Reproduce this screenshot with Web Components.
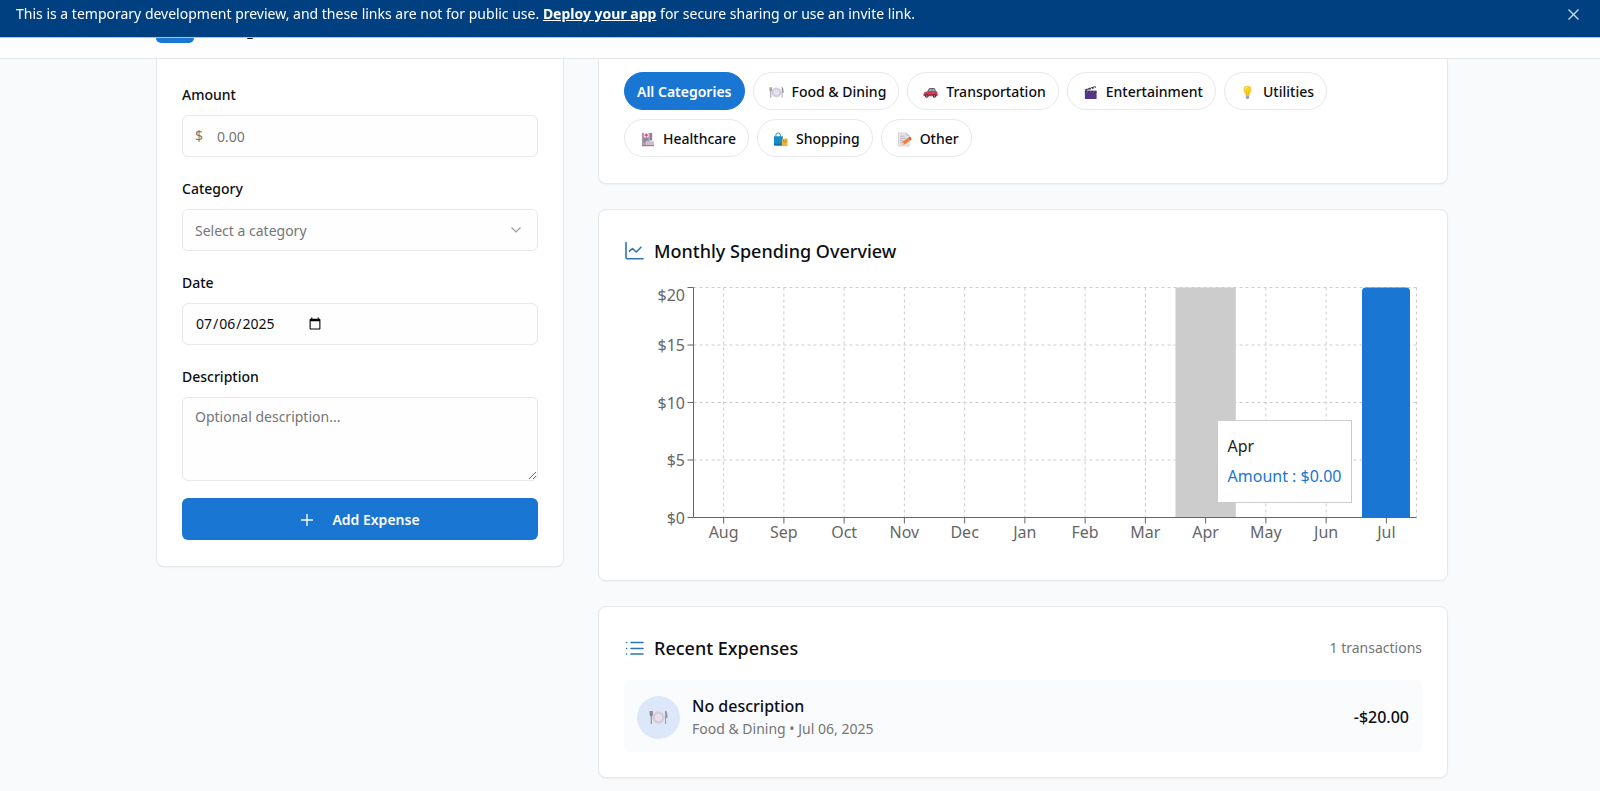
<!DOCTYPE html>
<html lang="en">
<head>
<meta charset="utf-8">
<meta name="viewport" content="width=device-width, initial-scale=1">
<title>Expenses</title>
<style>
  :root {
    --blue: #1976d2;
    --line: #e6e8eb;
    --ink: #0c0e12;
    --muted: #757575;
  }
  body {
    margin: 0;
    background: #f9fafc;
    color: var(--ink);
    font: 14px/20px "Noto Sans", "Open Sans", sans-serif;
  }
  main {
    box-sizing: border-box;
    max-width: 1296px;
    margin: 0 auto;
    padding: 0 0 12px 4px;
    display: grid;
    grid-template-columns: minmax(0, 1fr) minmax(0, 1fr) minmax(0, 1fr);
    column-gap: 34px;
    align-items: start;
  }
  .wide {
    grid-column: span 2;
    display: grid;
    gap: 25px;
  }
  @media (max-width: 900px) {
    main { grid-template-columns: minmax(0, 1fr); }
    .wide { grid-column: auto; }
  }
</style>
</head>
<body>
<preview-banner></preview-banner>
<app-header></app-header>
<main>
  <ui-card flush><expense-form></expense-form></ui-card>
  <div class="wide">
    <ui-card flush tight>
      <pill-row>
        <category-pill active>All Categories</category-pill>
        <category-pill icon="food">Food &amp; Dining</category-pill>
        <category-pill icon="car">Transportation</category-pill>
        <category-pill icon="film">Entertainment</category-pill>
        <category-pill icon="bulb">Utilities</category-pill>
        <category-pill icon="hospital">Healthcare</category-pill>
        <category-pill icon="bags">Shopping</category-pill>
        <category-pill icon="memo">Other</category-pill>
      </pill-row>
    </ui-card>
    <ui-card>
      <section-title icon="chart">Monthly Spending Overview</section-title>
      <spending-chart></spending-chart>
    </ui-card>
    <ui-card>
      <section-title icon="list">Recent Expenses<span slot="aside">1 transactions</span></section-title>
      <expense-row icon="food">
        No description
        <span slot="meta">Food &amp; Dining • Jul 06, 2025</span>
        <span slot="amount">-$20.00</span>
      </expense-row>
    </ui-card>
  </div>
</main>

<script>
const ICONS = {
  food: `<svg viewBox="0 0 16 16" aria-hidden="true"><circle cx="8" cy="8" r="5.3" fill="#d9d0de"/><circle cx="8" cy="8" r="3.7" fill="#e9dfec" stroke="#c5bccb" stroke-width=".6"/><path d="M1 2.500v3.200q0 1 .9 1.200V13.500M2.800 2.500v3.200q0 1-.9 1.200M1.900 2.500v4" fill="none" stroke="#8d8791" stroke-width=".9"/><path d="M14 13.500V2.500q1.200 1.200 1.200 5.500H14" fill="#a19aa6" stroke="#8d8791" stroke-width=".7"/></svg>`,
  car: `<svg viewBox="0 0 16 16" aria-hidden="true"><path d="M4.500 7l1.800-3.200q.3-.5.9-.5h4.600q.6 0 .9.500L14 7z" fill="#57626f"/><path d="M6 6.800L7.300 4.300h1.900v2.500zM10 4.300h1.700L13 6.800h-3z" fill="#9fb6cc"/><path d="M.6 9.500q0-2 2.200-2.400L6 6.500h7.500q1.900.2 2 1.800V11q0 .9-1 .9H1.500q-.9 0-.9-.9z" fill="#d53a50"/><path d="M.6 10.500h15" stroke="#8f2a42" stroke-width=".8"/><circle cx="4" cy="11.700" r="1.900" fill="#3b2d3d"/><circle cx="12.200" cy="11.700" r="1.900" fill="#3b2d3d"/><circle cx="4" cy="11.700" r=".8" fill="#b5aab8"/><circle cx="12.200" cy="11.700" r=".8" fill="#b5aab8"/></svg>`,
  film: `<svg viewBox="0 0 16 16" aria-hidden="true"><rect x="2" y="7" width="12.500" height="8" rx="1" fill="#553588"/><path d="M2 4.500L13.200 1l.6 1.900L2.600 6.300z" fill="#4a4453"/><path d="M4.500 3.800l1.500 1.400M8 2.700l1.500 1.400M11.300 1.700l1.400 1.300" stroke="#e9e6ee" stroke-width="1"/><rect x="2" y="6" width="12.500" height="2.200" fill="#3f2a66"/><path d="M4 8.200l1.500-2.200M7.500 8.200L9 6M11 8.200L12.500 6" stroke="#c9bfe0" stroke-width=".5"/></svg>`,
  bulb: `<svg viewBox="0 0 16 16" aria-hidden="true"><path d="M8 .800a4.300 4.300 0 0 1 4.300 4.300c0 2.600-2 3.300-2.300 6.200H6C5.700 8.400 3.700 7.700 3.700 5.100A4.300 4.300 0 0 1 8 .800z" fill="#f6cf2b"/><path d="M6 4.500q0-1.800 1.700-2.300" fill="none" stroke="#fff3a6" stroke-width="1"/><path d="M7 6.500v4.500M9 6.500v4.500" stroke="#e5a72b" stroke-width=".6"/><path d="M6.200 11.300h3.600v2.400q-.4 1.500-1.800 1.500t-1.800-1.500z" fill="#a79fae"/></svg>`,
  hospital: `<svg viewBox="0 0 16 16" aria-hidden="true"><path d="M2 1h8.500v14H2z" fill="#a79aae"/><path d="M10.500 1H13v8h-2.500z" fill="#8b8094"/><rect x="4.200" y="1" width="5" height="4.600" fill="#f6e9ef"/><path d="M6.700 1.500v3.600M4.900 3.300h3.600" stroke="#e0405c" stroke-width="1.300"/><path d="M3.500 7.500h5M3.500 9.500h3" stroke="#7a6d86" stroke-width="1"/><rect x="6" y="9.800" width="9" height="4" rx=".6" fill="#cdbfd0"/><path d="M2 14.500h13" stroke="#c65f86" stroke-width="1.200"/></svg>`,
  bags: `<svg viewBox="0 0 16 16" aria-hidden="true"><path d="M3 5V3.500Q3 1 5.500 1T8 3.500V5" fill="none" stroke="#2a86b4" stroke-width="1"/><path d="M1 4.500h9.500v10H1.800q-.8 0-.8-.8z" fill="#168dc4"/><path d="M1 12.500h9.500v2H1.800q-.8 0-.8-.8z" fill="#0f6fa6"/><path d="M9.500 7h6v8h-6z" fill="#e9b53c"/><path d="M11 8.500q0 2 1.500 2t1.500-2" fill="none" stroke="#a8741f" stroke-width=".8"/></svg>`,
  memo: `<svg viewBox="0 0 16 16" aria-hidden="true"><path d="M1.500 1h8.500l3 3v11H1.500z" fill="#e6e2ea" stroke="#c4bdca" stroke-width=".6"/><path d="M10 1v3h3" fill="#c4bdca"/><path d="M3.300 4.500h5M3.300 6.800h6.500M3.300 9h3.500M3.300 11.300h2" stroke="#a8a1b0" stroke-width=".7"/><path d="M5 13.500l1-3.300 6.500-4.400 2 2.900-6.500 4.500z" fill="#f0803c"/><path d="M12.300 5.900l1-.7q.6-.3 1 .2l1 1.500q.3.600-.2 1l-.9.600z" fill="#d0435a"/><path d="M5 13.500l1-3.300 2 3z" fill="#f4cda0"/></svg>`,
  chart: `<svg viewBox="0 0 20 20" aria-hidden="true" fill="none" stroke="#2b76b9" stroke-width="1.600" stroke-linecap="round" stroke-linejoin="round"><path d="M2 1.500v15q0 1.200 1.200 1.200H19"/><path d="M5.500 10.200l3-2.700 3.700 3.500 4.800-4.800"/></svg>`,
  list: `<svg viewBox="0 0 20 20" aria-hidden="true" fill="none" stroke="#2b76b9" stroke-width="1.600" stroke-linecap="round"><path d="M7 4.500H19M7 10.500H19M7 16H19"/><path d="M2.500 4.500h.1M2.500 10.500h.1M2.500 16h.1"/></svg>`,
};

const define = (name, render) => customElements.define(name, class extends HTMLElement {
  constructor() {
    super();
    this.attachShadow({ mode: 'open' });
  }
  connectedCallback() {
    this.shadowRoot.innerHTML = render(this);
  }
});

define('preview-banner', () => `
  <style>
    :host { position: fixed; inset: 0 0 auto 0; z-index: 2; display: flex; justify-content: space-between;
      box-sizing: border-box; min-height: 37px; padding: 0 20px 0 16px; background: #004080; color: #fff; line-height: 27px;
      box-shadow: 0 1px 0 #a9c4e4, 0 2px 6px #0000001f; }
    p { margin: 0; }
    a { color: inherit; font-weight: 700; text-decoration: underline; }
    button { display: flex; align-items: center; height: 28px; padding: 0; border: 0; background: none; color: #fff; cursor: pointer; }
    svg { width: 13px; height: 13px; }
  </style>
  <p>This is a temporary development preview, and these links are not for public use. <a href="#deploy">Deploy your app</a> for secure sharing or use an invite link.</p>
  <button type="button" aria-label="Close"><svg viewBox="0 0 13 13"><path d="M1.500 1.500l10 10M11.500 1.500l-10 10" fill="none" stroke="#cfe0f2" stroke-width="1.300"/></svg></button>
`);

define('app-header', () => `
  <style>
    :host { position: sticky; top: 0; z-index: 3; display: block; pointer-events: none; border-bottom: 1px solid #e4e7e9;
      background: linear-gradient(#0000 38px, #fefefe 38px); }
    div { box-sizing: border-box; max-width: 1296px; margin: 0 auto; padding: 38px 0 15px 4px; display: flex; gap: 53px; }
    i { width: 38px; height: 5px; border-radius: 0 0 8px 8px; background: var(--blue); }
    s { width: 6px; height: 1px; border-radius: 0 0 3px 3px; background: var(--ink); }
  </style>
  <div><i></i><s></s></div>
`);

define('ui-card', () => `
  <style>
    :host { display: block; box-sizing: border-box; min-width: 0; padding: 25px; background: #fff; border: 1px solid var(--line);
      border-radius: 8px; box-shadow: 0 1px 2px #0000000a; }
    :host([flush]) { padding-top: 26px; padding-bottom: 26px; border-top: 0; border-radius: 0 0 8px 8px; }
    :host([tight]) { padding-top: 13px; }
  </style>
  <slot></slot>
`);

define('section-title', el => `
  <style>
    :host { display: flex; align-items: center; gap: 10px; min-height: 32px; margin-bottom: 16px; }
    svg { display: block; width: 20px; height: 20px; }
    h2 { flex: 1; margin: 0; font-size: 18px; line-height: 32px; font-weight: 500; }
    ::slotted([slot=aside]) { color: var(--muted); }
  </style>
  ${ICONS[el.getAttribute('icon')]}<h2><slot></slot></h2><slot name="aside"></slot>
`);

define('pill-row', () => `
  <style>:host { display: flex; flex-wrap: wrap; gap: 9px 8px; max-width: 740px; }</style>
  <slot></slot>
`);

define('category-pill', el => `
  <style>
    :host { display: block; }
    button { display: flex; align-items: center; gap: 7px; box-sizing: border-box; height: 38px; padding: 2px 12px 0 13px;
      border: 1px solid var(--line); border-radius: 19px; background: #fff; color: var(--ink); font: inherit; font-weight: 500; cursor: pointer; }
    :host([active]) button { padding: 2px 12px 0; background: var(--blue); border-color: var(--blue); color: #fff; font-weight: 600; }
    svg { width: 15px; height: 15px; padding: 0 1px 0 2px; }
  </style>
  <button type="button" aria-pressed="${el.hasAttribute('active')}">${ICONS[el.getAttribute('icon')] || ''}<slot></slot></button>
`);

define('expense-form', () => `
  <style>
    :host { display: block; }
    form { display: grid; margin: 0; }
    label { margin-bottom: 10px; line-height: 20px; font-weight: 500; }
    .box { position: relative; display: grid; margin-bottom: 22px; }
    .box:last-of-type { margin-bottom: 17px; }
    input, select, textarea { box-sizing: border-box; width: 100%; height: 42px; margin: 0; padding: 0 12px; border: 1px solid var(--line);
      border-radius: 6px; background: #fefefe; color: var(--ink); font: inherit; outline: 0; }
    select { appearance: none; padding-top: 2px; color: var(--muted); }
    #amount { padding-left: 34px; }
    .box > span { position: absolute; left: 13px; top: 11px; color: var(--muted); }
    .box > svg { position: absolute; right: 16px; top: 15px; width: 12px; height: 12px; }
    ::placeholder { color: var(--muted); opacity: 1; }
    textarea { display: block; height: 84px; padding: 9px 12px; resize: vertical; }
    ::-webkit-datetime-edit { flex: none; }
    ::-webkit-calendar-picker-indicator { margin-left: 5px; width: 14px; height: 14px; padding: 0; }
    button { display: flex; align-items: center; justify-content: center; gap: 18px; height: 42px; padding: 2px 0 0; border: 0;
      border-radius: 6px; background: var(--blue); color: #fff; font: inherit; font-weight: 600; cursor: pointer; }
    button svg { width: 14px; height: 14px; }
  </style>
  <form>
    <label for="amount">Amount</label>
    <div class="box"><span>$</span><input id="amount" inputmode="decimal" placeholder="0.00"></div>
    <label for="category">Category</label>
    <div class="box">
      <select id="category"><option>Select a category</option></select>
      <svg viewBox="0 0 12 12" aria-hidden="true"><path d="M1.500 3.500L6 8l4.500-4.500" fill="none" stroke="#9a9a9a" stroke-width="1.100"/></svg>
    </div>
    <label for="date">Date</label>
    <div class="box"><input id="date" type="date" value="2025-07-06"></div>
    <label for="description">Description</label>
    <div class="box"><textarea id="description" placeholder="Optional description..."></textarea></div>
    <button type="button"><svg viewBox="0 0 14 14" aria-hidden="true"><path d="M7 1v12M1 7h12" stroke="#fff" stroke-width="1.300"/></svg>Add Expense</button>
  </form>
`);

const MONTHS = ['Aug', 'Sep', 'Oct', 'Nov', 'Dec', 'Jan', 'Feb', 'Mar', 'Apr', 'May', 'Jun', 'Jul'];
const PLOT = { left: 69.5, right: 792.5, top: 4.5, bottom: 234.5 };
const chartSvg = () => {
  const step = (PLOT.right - PLOT.left) / MONTHS.length;
  const mid = i => PLOT.left + step * (i + 0.5);
  const level = v => PLOT.bottom - v * (PLOT.bottom - PLOT.top) / 20;
  const values = [0, 5, 10, 15, 20];
  const rows = values.slice(1).map(v => `M${PLOT.left} ${level(v)}H${PLOT.right}`).join('');
  const columns = MONTHS.map((m, i) => `M${mid(i)} ${PLOT.top}V${PLOT.bottom}`).join('');
  const ticks = values.map(v => `M${PLOT.left - 6} ${level(v)}H${PLOT.left}`).join('')
    + MONTHS.map((m, i) => `M${mid(i)} ${PLOT.bottom}v6`).join('');
  return `<svg viewBox="0 0 798 272" role="img" aria-label="Monthly spending">
    <path class="grid" d="${rows}${columns}M${PLOT.right} ${PLOT.top}V${PLOT.bottom}"/>
    <rect x="${PLOT.left + step * 8}" y="${PLOT.top}" width="${step}" height="230" fill="#ccc"/>
    <path class="axis" d="M${PLOT.left} ${PLOT.top}V${PLOT.bottom}H${PLOT.right}${ticks}"/>
    <path d="M738 ${PLOT.bottom}V8.500a4 4 0 0 1 4-4h40a4 4 0 0 1 4 4V${PLOT.bottom}z" fill="#1976d2"/>
    ${values.map(v => `<text x="61" y="${v === 20 ? 18 : level(v) + 6}" text-anchor="end">$${v}</text>`).join('')}
    ${MONTHS.map((m, i) => `<text x="${mid(i)}" y="255" text-anchor="middle">${m}</text>`).join('')}
  </svg>`;
};

define('spending-chart', () => `
  <style>
    :host { position: relative; display: block; }
    svg { display: block; width: 100%; height: auto; }
    text { font-size: 16px; fill: #666; }
    .grid { fill: none; stroke: #ccc; stroke-dasharray: 3 3; }
    .axis { fill: none; stroke: #666; }
    aside { position: absolute; left: 74%; top: 50%; box-sizing: border-box; margin: 1px 0 0 2px; padding: 10px; border: 1px solid #ccc;
      background: #fff; font-size: 16px; white-space: nowrap; }
    p { margin: 0; line-height: 30px; color: #222; }
    p + p { line-height: 31px; color: #1976d2; }
  </style>
  ${chartSvg()}
  <aside><p>Apr</p><p>Amount : $0.00</p></aside>
`);

define('expense-row', el => `
  <style>
    :host { display: flex; align-items: center; gap: 12px; box-sizing: border-box; min-height: 72px; padding: 2px 13px 0; border-radius: 6px; background: #fafbfd; font-size: 16px; font-weight: 500; }
    i { display: grid; place-items: center; width: 43px; height: 43px; border-radius: 50%; background: #dce8fa; }
    svg { width: 19px; height: 19px; }
    div { flex: 1; line-height: 24px; }
    ::slotted([slot=meta]) { display: block; color: var(--muted); font-size: 14px; font-weight: 400; line-height: 22px; }
  </style>
  <i>${ICONS[el.getAttribute('icon')]}</i><div><slot></slot><slot name="meta"></slot></div><slot name="amount"></slot>
`);
</script>
</body>
</html>
